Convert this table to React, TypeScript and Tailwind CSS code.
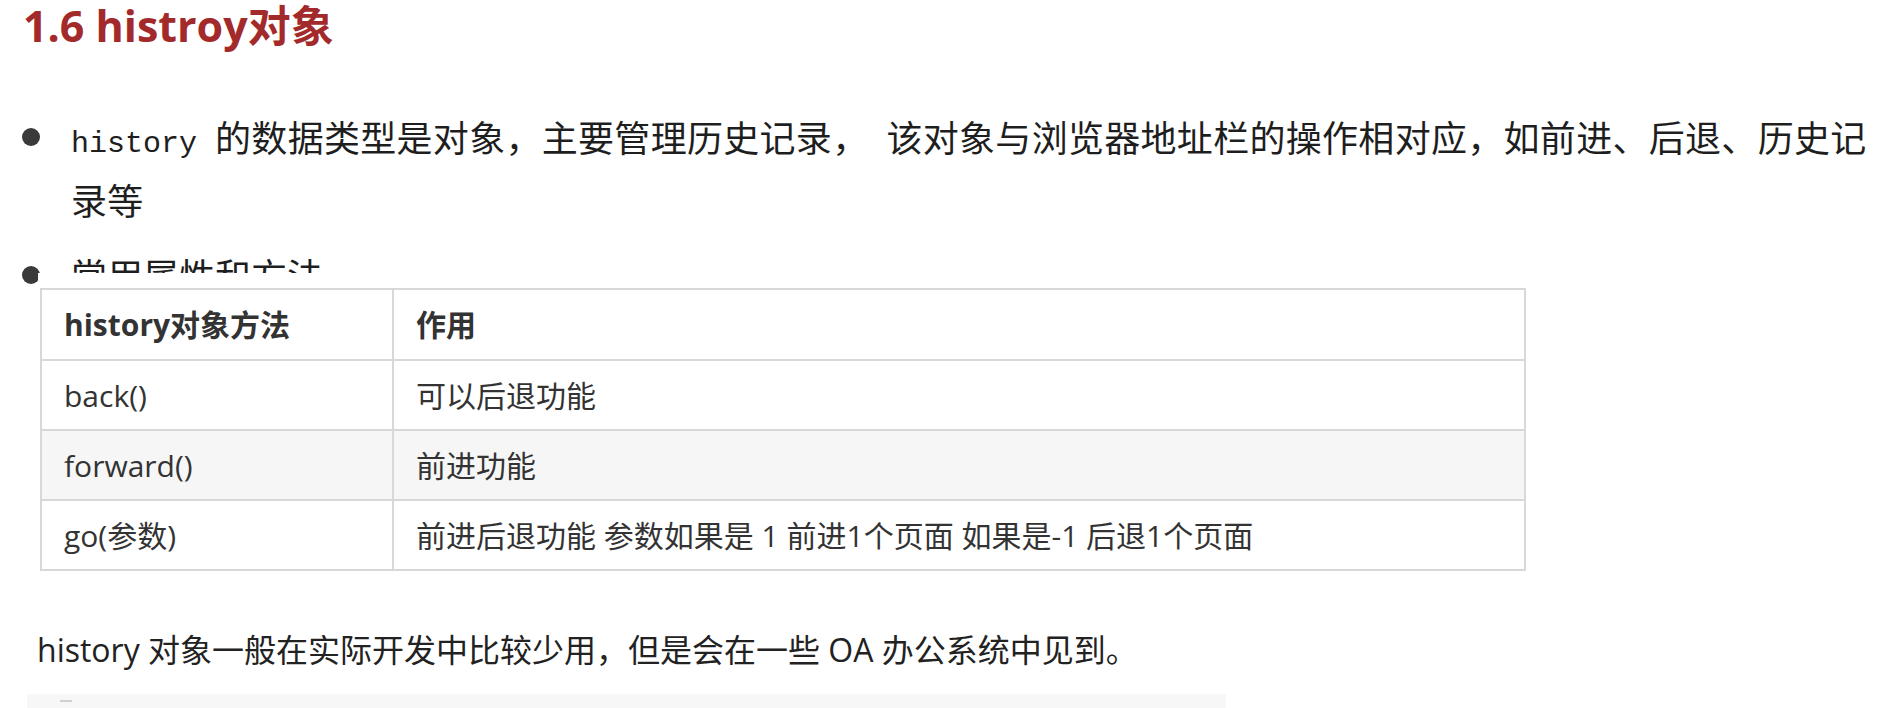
import React from 'react';

const cjk = '"Noto Sans CJK SC", sans-serif';

const rows = [
  { method: 'back()', desc: '可以后退功能', shade: false },
  { method: 'forward()', desc: '前进功能', shade: true },
  { method: 'go(参数)', desc: '前进后退功能 参数如果是 1 前进1个页面 如果是-1 后退1个页面', shade: false },
];

function Mono({ children }: { children: React.ReactNode }) {
  return <span className="font-['Liberation_Mono',monospace] text-[30px] leading-none tracking-normal">{children}</span>;
}

function Bullet() {
  return (
    <div className="w-[71px] h-[63px] flex-shrink-0 flex items-center pl-[22px]">
      <span className="block w-[18px] h-[18px] rounded-full bg-[#3a3a3a]" />
    </div>
  );
}

export default function App() {
  return (
    <div className="w-[1894px] h-[708px] overflow-hidden bg-white">
      {/* section title */}
      <h1 className="h-[52px] pl-[23px] leading-[52px] text-[43px] font-bold text-[#a32a2b] font-['Open_Sans','Noto_Sans_CJK_SC',sans-serif]">
        1.6 histroy对象
      </h1>

      {/* bullet list */}
      <ul className="mt-[53px] text-[36px] text-[#1e1e1e]" style={{ fontFamily: cjk }}>
        <li className="flex">
          <Bullet />
          <p className="w-[1810px] h-[126px] leading-[63px] tracking-[0.3px]">
            <Mono>history </Mono>的数据类型是对象，主要管理历史记录，<Mono> </Mono>该对象与浏览器地址栏的操作相对应，如前进、后退、历史记录等
          </p>
        </li>
        <li className="flex mt-[12px]">
          <Bullet />
          <p className="h-[63px] leading-[63px]">常用属性和方法</p>
        </li>
      </ul>

      {/* pasted table image covers the last bullet */}
      <div className="relative -mt-[33px] ml-[38px] w-[1494px] bg-white pt-[15px] pl-[2px]">
        <table className="w-[1486px] border-collapse text-[30px] text-[#333] font-['Open_Sans','Noto_Sans_CJK_SC',sans-serif]">
          <thead>
            <tr className="h-[71px]">
              <th className="w-[352px] border-2 border-[#d8d8d8] pl-[22px] text-left font-bold">history对象方法</th>
              <th className="border-2 border-[#d8d8d8] pl-[22px] text-left font-bold">作用</th>
            </tr>
          </thead>
          <tbody>
            {rows.map((r) => (
              <tr key={r.method} className={`h-[70px] ${r.shade ? 'bg-[#f6f6f6]' : 'bg-white'}`}>
                <td className="border-2 border-[#d8d8d8] pl-[22px]">{r.method}</td>
                <td className="border-2 border-[#d8d8d8] pl-[22px]">{r.desc}</td>
              </tr>
            ))}
          </tbody>
        </table>
      </div>

      <p className="mt-[59px] h-[40px] pl-[37px] leading-[40px] text-[32px] text-[#222] font-['Open_Sans','Noto_Sans_CJK_SC',sans-serif]">
        history 对象一般在实际开发中比较少用，但是会在一些 OA 办公系统中见到。
      </p>

      {/* start of a code block, cut off by the frame */}
      <div className="mt-[24px] ml-[27px] w-[1199px] h-[20px] bg-[#f7f7f7] pt-[6px] pl-[33px]">
        <span className="block w-[12px] h-[2px] bg-[#d0d0d0]" />
      </div>
    </div>
  );
}
